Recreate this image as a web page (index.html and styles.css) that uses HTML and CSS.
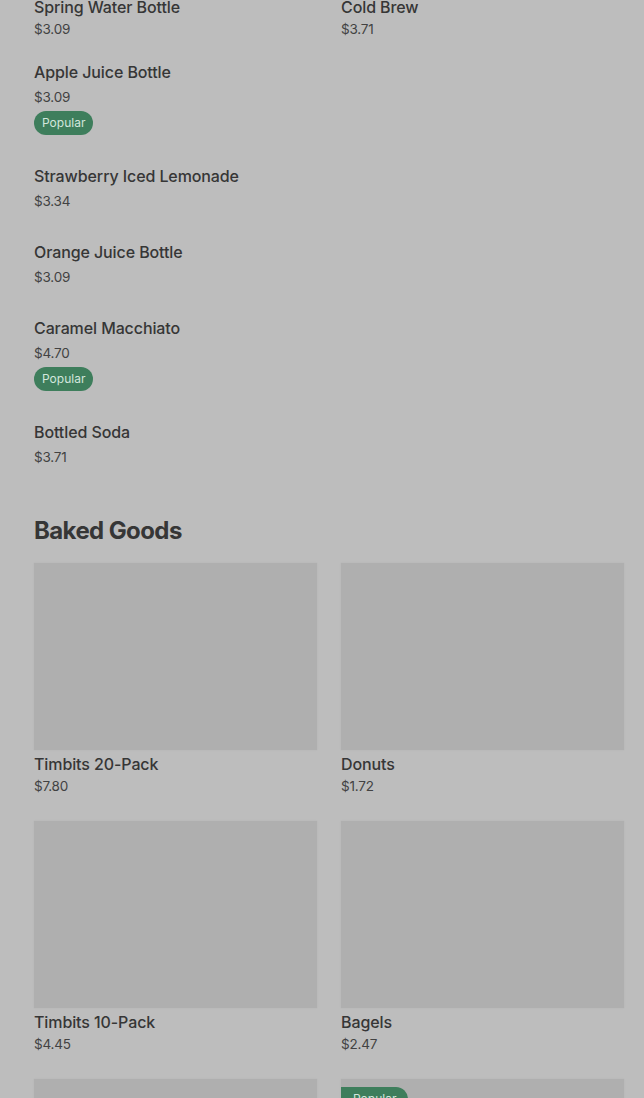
FILE: index.html
```html
<html><head><meta charset="UTF-8">
<meta name="viewport" content="width=device-width, initial-scale=1.0">
<title>Menu</title>
<link rel="stylesheet" href="styles.css">
</head>
<body>
    <div class="menu">
        <div class="card-grid top-row">
            <div class="card">
                <div class="card-image"></div>
                <div class="item-name">Spring Water Bottle</div>
                <div class="item-price">$3.09</div>
            </div>
            <div class="card">
                <div class="card-image"></div>
                <div class="item-name">Cold Brew</div>
                <div class="item-price">$3.71</div>
            </div>
        </div>

        <div class="item-list">
            <div class="list-item">
                <div class="item-name">Apple Juice Bottle</div>
                <div class="item-price">$3.09</div>
                <span class="badge">Popular</span>
            </div>
            <div class="list-item">
                <div class="item-name">Strawberry Iced Lemonade</div>
                <div class="item-price">$3.34</div>
            </div>
            <div class="list-item">
                <div class="item-name">Orange Juice Bottle</div>
                <div class="item-price">$3.09</div>
            </div>
            <div class="list-item">
                <div class="item-name">Caramel Macchiato</div>
                <div class="item-price">$4.70</div>
                <span class="badge">Popular</span>
            </div>
            <div class="list-item">
                <div class="item-name">Bottled Soda</div>
                <div class="item-price">$3.71</div>
            </div>
        </div>

        <h2 class="section-title">Baked Goods</h2>
        <div class="card-grid">
            <div class="card">
                <div class="card-image"></div>
                <div class="item-name">Timbits 20-Pack</div>
                <div class="item-price">$7.80</div>
            </div>
            <div class="card">
                <div class="card-image"></div>
                <div class="item-name">Donuts</div>
                <div class="item-price">$1.72</div>
            </div>
            <div class="card">
                <div class="card-image"></div>
                <div class="item-name">Timbits 10-Pack</div>
                <div class="item-price">$4.45</div>
            </div>
            <div class="card">
                <div class="card-image"></div>
                <div class="item-name">Bagels</div>
                <div class="item-price">$2.47</div>
            </div>
            <div class="card">
                <div class="card-image"></div>
            </div>
            <div class="card">
                <div class="card-image">
                    <span class="badge badge-corner">Popular</span>
                </div>
            </div>
        </div>
    </div>
</body>
</html>
```

FILE: styles.css
```css
:root {
    --background-color: #bdbdbd;
    --image-color: #afafaf;
    --text-color: #363636;
    --price-color: #424242;
    --badge-color: #3e7e5c;
    --badge-text: #d3e6dc;
}

body {
    font-family: 'Inter', 'Liberation Sans', sans-serif;
    background-color: var(--background-color);
    color: var(--text-color);
    margin: 0;
    padding: 0;
    height: 1098px;
    overflow: hidden;
}

.menu {
    padding: 0 20px 0 34px;
}

.card-grid {
    display: grid;
    grid-template-columns: repeat(2, 1fr);
    column-gap: 24px;
    row-gap: 24px;
}

/* page is scrolled: the images of this row sit above the fold */
.top-row {
    margin-top: -194px;
}

.card-image {
    position: relative;
    height: 187px;
    background-color: var(--image-color);
    box-shadow: 0 0 2px rgba(0, 0, 0, 0.06);
}

.item-name {
    font-size: 16px;
    font-weight: 500;
    line-height: 22px;
    letter-spacing: -0.1px;
}

.card .item-name {
    margin-top: 3px;
}

.item-price {
    font-size: 13.5px;
    font-weight: 400;
    line-height: 22px;
    color: var(--price-color);
    letter-spacing: -0.2px;
}

.list-item .item-price {
    margin-top: 3px;
}

.item-list {
    margin-top: 21px;
}

.list-item {
    padding-bottom: 29px;
}

.badge {
    display: inline-block;
    margin: 3px 0 1px;
    height: 24px;
    line-height: 24px;
    padding: 0 8px;
    border-radius: 12px;
    background-color: var(--badge-color);
    color: var(--badge-text);
    font-size: 12px;
    font-weight: 400;
}

.badge-corner {
    position: absolute;
    top: 8px;
    left: 0;
    margin: 0;
    padding: 0 12px;
    border-radius: 0 12px 12px 0;
}

.section-title {
    font-size: 24px;
    font-weight: 700;
    line-height: 32px;
    letter-spacing: -0.6px;
    margin: 18px 0 16px;
}
```
